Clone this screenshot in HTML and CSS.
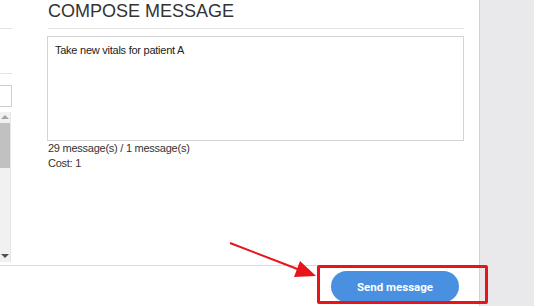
FILE: index.html
```html
<!DOCTYPE html>
<html lang="en">
<head>
  <meta charset="UTF-8" />
  <meta name="viewport" content="width=device-width, initial-scale=1.0"/>
  <title>Compose Message</title>
  <link rel="stylesheet" href="styles.css">
</head>
<body>

<div class="page">
  <!-- MODAL -->
  <div class="modal">
    <div class="modal-body">

      <!-- left list (cut off) -->
      <div class="side">
        <div class="side-head"></div>
        <div class="side-row"></div>
        <div class="side-input"></div>
        <div class="side-scroll">
          <span class="arrow-up"></span>
          <span class="thumb"></span>
          <span class="arrow-down"></span>
        </div>
      </div>

      <!-- compose -->
      <div class="compose">
        <h2>COMPOSE MESSAGE</h2>
        <textarea class="msg">Take new vitals for patient A</textarea>
        <div class="stats">
          <p>29 message(s) / 1 message(s)</p>
          <p>Cost: 1</p>
        </div>
      </div>
    </div>

    <div class="modal-footer">
      <button type="button" class="btn-send">Send message</button>
    </div>
  </div>

  <div class="backdrop"></div>
</div>

<!-- annotation -->
<div class="highlight"></div>
<svg class="pointer" width="534" height="306" viewBox="0 0 534 306">
  <line x1="230" y1="243" x2="300" y2="270" stroke="#e8141c" stroke-width="2"/>
  <polygon points="316,276 300,261 294,277" fill="#e8141c"/>
</svg>

</body>
</html>
```

FILE: styles.css
```css
* {
  box-sizing: border-box;
}

body {
  margin: 0;
  font-family: "Liberation Sans", Arial, sans-serif;
  color: #333;
  overflow: hidden;
}

.page {
  display: flex;
  height: 306px;
}

/* === MODAL === */
.modal {
  width: 480px;
  background: #fff;
  border-right: 1px solid #d2d2d4;
  display: flex;
  flex-direction: column;
}

.modal-body {
  height: 265px;
  display: flex;
}

.backdrop {
  flex: 1;
  background: #e9e9eb;
}

/* === LEFT LIST === */
.side {
  width: 12px;
}

.side-head {
  height: 29px;
  border-bottom: 1px solid #e3e3e3;
}

.side-row {
  height: 45px;
  border-bottom: 1px solid #e3e3e3;
}

.side-input {
  margin-top: 11px;
  height: 22px;
  width: 12px;
  border: 1px solid #cfcfcf;
  border-left: none;
}

.side-scroll {
  margin-top: 5px;
  width: 11px;
  height: 150px;
  background: #f1f1f1;
  border-right: 1px solid #e6e6e6;
  display: flex;
  flex-direction: column;
  align-items: center;
}

.arrow-up,
.arrow-down {
  width: 0;
  height: 0;
  border-left: 4px solid transparent;
  border-right: 4px solid transparent;
}

.arrow-up {
  margin-top: 3px;
  border-bottom: 4px solid #a3a3a3;
}

.arrow-down {
  margin-top: auto;
  margin-bottom: 4px;
  border-top: 4px solid #505050;
}

.thumb {
  margin-top: 4px;
  width: 10px;
  height: 45px;
  background: #c1c1c1;
}

/* === COMPOSE === */
.compose {
  margin-left: 36px;
  width: 416px;
}

.compose h2 {
  margin: 0;
  font-size: 18px;
  font-weight: normal;
  line-height: 22px;
  padding-bottom: 6px;
  border-bottom: 1px solid #e3e3e3;
  color: #333;
}

.msg {
  display: block;
  margin: 7px 0 0 -1px;
  width: 417px;
  height: 105px;
  padding: 6px 7px;
  border: 1px solid #d3d3d3;
  font-family: "Liberation Sans", Arial, sans-serif;
  font-size: 11px;
  letter-spacing: -0.25px;
  line-height: 14px;
  color: #222;
  resize: none;
}

.stats p {
  margin: 0;
  font-size: 11px;
  letter-spacing: -0.25px;
  line-height: 15px;
}

/* === FOOTER === */
.modal-footer {
  flex: 1;
  border-top: 1px solid #dcdcdc;
  display: flex;
  justify-content: flex-end;
  align-items: flex-start;
  padding: 5px 20px 0 0;
}

.btn-send {
  width: 128px;
  height: 31px;
  border: none;
  border-radius: 16px;
  background: #4a90e0;
  color: #fff;
  font-family: Roboto, "Liberation Sans", sans-serif;
  font-size: 11.5px;
  font-weight: bold;
  cursor: pointer;
}

/* === ANNOTATION === */
.highlight {
  position: absolute;
  left: 317px;
  top: 265px;
  width: 171px;
  height: 39px;
  border: 3px solid #e8141c;
  border-radius: 2px;
}

.pointer {
  position: absolute;
  left: 0;
  top: 0;
  pointer-events: none;
}
```
